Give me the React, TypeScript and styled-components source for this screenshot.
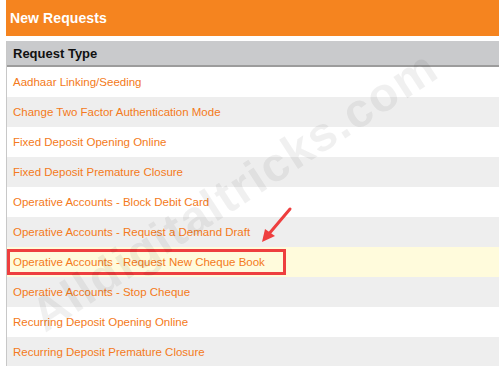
import styled, { createGlobalStyle } from "styled-components";

const GlobalStyle = createGlobalStyle`
  body {
    margin: 0;
    background: #fff;
    font-family: "Liberation Sans", Arial, sans-serif;
  }
`;

const Panel = styled.section`
  position: relative;
  width: 493px;
  margin-left: 6px;
  height: 366px;
  overflow: hidden;
`;

const Title = styled.h2`
  margin: 0 0 5px;
  height: 36px;
  background: #f5841f;
  color: #fff;
  font-size: 14px;
  font-weight: bold;
  display: flex;
  align-items: center;
  padding-left: 4px;
  letter-spacing: 0.1px;
`;

const Table = styled.div`
  border-left: 1px solid #c8c8c8;
`;

const HeadCell = styled.div`
  height: 24px;
  background: #c9cacc;
  border-bottom: 2px solid #9c9c9c;
  display: flex;
  align-items: center;
  padding-left: 6px;
  font-size: 13px;
  font-weight: bold;
  color: #111;
`;

const Row = styled.div<{ $alt?: boolean; $picked?: boolean }>`
  height: 30px;
  display: flex;
  align-items: center;
  padding-left: 6px;
  background: ${(p) => (p.$picked ? "#fffbdc" : p.$alt ? "#eeeeee" : "#fff")};
`;

const Link = styled.span`
  color: #f47a20;
  font-size: 11.5px;
`;

const Picked = styled.span`
  display: flex;
  align-items: center;
  height: 20px;
  margin-left: -6px;
  padding: 0 5px 0 3px;
  border: 3px solid #ee3f3f;
  width: 265px;
`;

const Watermark = styled.div`
  position: absolute;
  left: 30px;
  top: 292px;
  font-size: 48px;
  font-weight: bold;
  color: rgba(0, 0, 0, 0.06);
  transform: rotate(-33deg);
  transform-origin: left center;
  white-space: nowrap;
  pointer-events: none;
  letter-spacing: 1.5px;
`;

const Arrow = styled.svg`
  position: absolute;
  left: 245px;
  top: 200px;
`;

const items = [
  "Aadhaar Linking/Seeding",
  "Change Two Factor Authentication Mode",
  "Fixed Deposit Opening Online",
  "Fixed Deposit Premature Closure",
  "Operative Accounts - Block Debit Card",
  "Operative Accounts - Request a Demand Draft",
  "Operative Accounts - Request New Cheque Book",
  "Operative Accounts - Stop Cheque",
  "Recurring Deposit Opening Online",
  "Recurring Deposit Premature Closure",
];

export default function App() {
  return (
    <>
      <GlobalStyle />
      <Panel>
        <Title>New Requests</Title>
        <Table>
          <HeadCell>Request Type</HeadCell>
          {items.map((t, i) =>
            i === 6 ? (
              <Row key={t} $picked>
                <Picked>
                  <Link>{t}</Link>
                </Picked>
              </Row>
            ) : (
              <Row key={t} $alt={i % 2 === 1}>
                <Link>{t}</Link>
              </Row>
            )
          )}
        </Table>
        <Watermark>Alldigitaltricks.com</Watermark>
        <Arrow width="50" height="50" viewBox="0 0 50 50">
          <line x1="39" y1="9" x2="17" y2="35" stroke="#ee3f3f" strokeWidth="3" strokeLinecap="round" />
          <polygon points="11,42 14,29 24,36" fill="#ee3f3f" />
        </Arrow>
      </Panel>
    </>
  );
}
